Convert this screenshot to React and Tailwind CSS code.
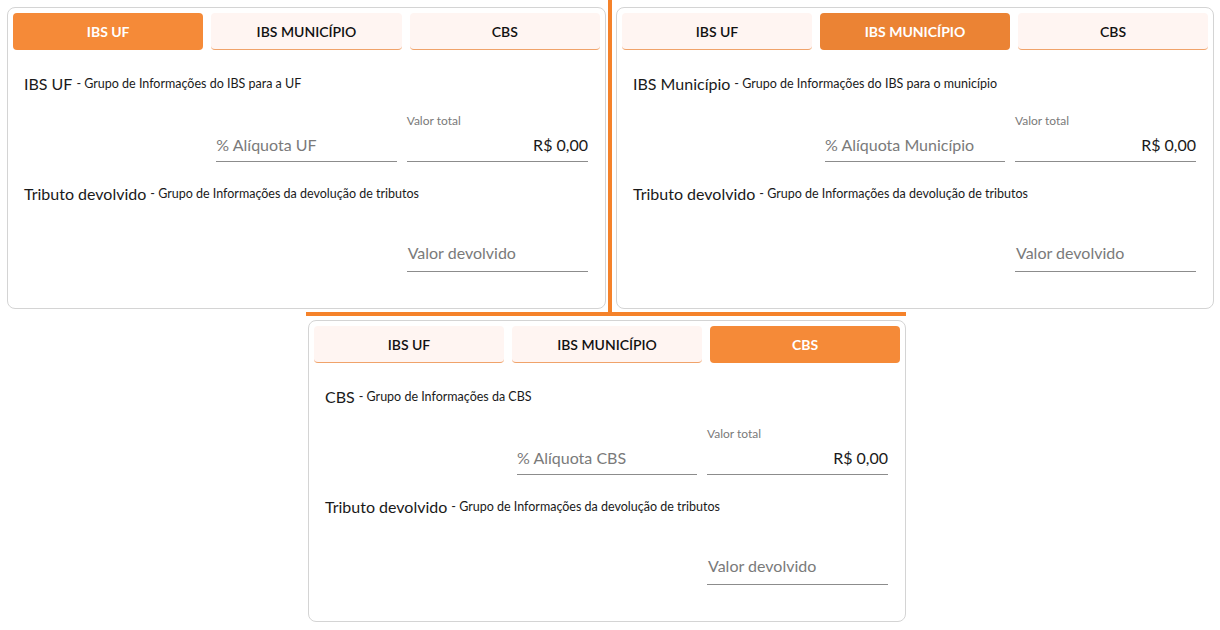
import React from "react";

const font = { fontFamily: "Lato, 'Noto Sans', sans-serif" };

function Tab({ label, active, dark }) {
  if (active) {
    return (
      <div
        className={`h-[37px] rounded-[4px] flex items-center justify-center text-[14px] font-bold text-white ${
          dark ? "bg-[#eb8334]" : "bg-[#f58a38]"
        }`}
      >
        {label}
      </div>
    );
  }
  return (
    <div className="h-[37px] rounded-[4px] flex items-center justify-center text-[14px] font-semibold text-[#111] bg-[#fff5f2] border-b border-[#f0a36a]">
      {label}
    </div>
  );
}

function Panel({ width, activeIndex, dark, title, subtitle, aliquota }) {
  const tabs = ["IBS UF", "IBS MUNICÍPIO", "CBS"];
  return (
    <div
      className="h-[302px] rounded-[8px] border border-[#d4d4d4] bg-white p-[5px] shrink-0"
      style={{ width }}
    >
      <div className="grid grid-cols-3 gap-[8px]">
        {tabs.map((t, i) => (
          <Tab key={t} label={t} active={i === activeIndex} dark={dark} />
        ))}
      </div>
      <div className="pl-[11px] pr-[12px]">
        <div className="mt-[24px] h-[20px] flex items-center text-[#1a1a1a] whitespace-nowrap">
          <span className="text-[16px]">{title}</span>
          <span className="text-[12.5px] ml-[4px]">- {subtitle}</span>
        </div>
        <div className="mt-[19px] grid grid-cols-3 gap-[10px] items-end">
          <div />
          <div className="h-[33px] flex items-center border-b border-[#8c8c8c] text-[16px] text-[#7a7a7a] ml-[1px]">
            {aliquota}
          </div>
          <div>
            <div className="h-[16px] flex items-center text-[12px] text-[#7a7a7a]">Valor total</div>
            <div className="h-[33px] flex items-center justify-end border-b border-[#8c8c8c] text-[16px] text-[#1a1a1a]">
              R$ 0,00
            </div>
          </div>
        </div>
        <div className="mt-[22px] h-[20px] flex items-center text-[#1a1a1a] whitespace-nowrap">
          <span className="text-[16px]">Tributo devolvido</span>
          <span className="text-[12.5px] ml-[4px]">- Grupo de Informações da devolução de tributos</span>
        </div>
        <div className="mt-[31px] grid grid-cols-3 gap-[10px]">
          <div />
          <div />
          <div className="h-[37px] flex items-center border-b border-[#8c8c8c] text-[16px] text-[#7a7a7a] pl-[1px]">
            Valor devolvido
          </div>
        </div>
      </div>
    </div>
  );
}

export default function App() {
  return (
    <div className="w-[1220px] h-[630px] bg-white overflow-hidden" style={font}>
      <div className="flex items-start">
        <div className="ml-[7px] mt-[7px]">
          <Panel
            width={599}
            activeIndex={0}
            title="IBS UF"
            subtitle="Grupo de Informações do IBS para a UF"
            aliquota="% Alíquota UF"
          />
        </div>
        <div className="ml-[2px] w-[4px] h-[313px] bg-[#f5822a]" />
        <div className="ml-[4px] mt-[7px]">
          <Panel
            width={598}
            activeIndex={1}
            dark
            title="IBS Município"
            subtitle="Grupo de Informações do IBS para o município"
            aliquota="% Alíquota Município"
          />
        </div>
      </div>
      <div className="ml-[306px] -mt-[1px] w-[600px] h-[4px] bg-[#f5822a]" />
      <div className="ml-[308px] mt-[4px]">
        <Panel
          width={598}
          activeIndex={2}
          title="CBS"
          subtitle="Grupo de Informações da CBS"
          aliquota="% Alíquota CBS"
        />
      </div>
    </div>
  );
}
